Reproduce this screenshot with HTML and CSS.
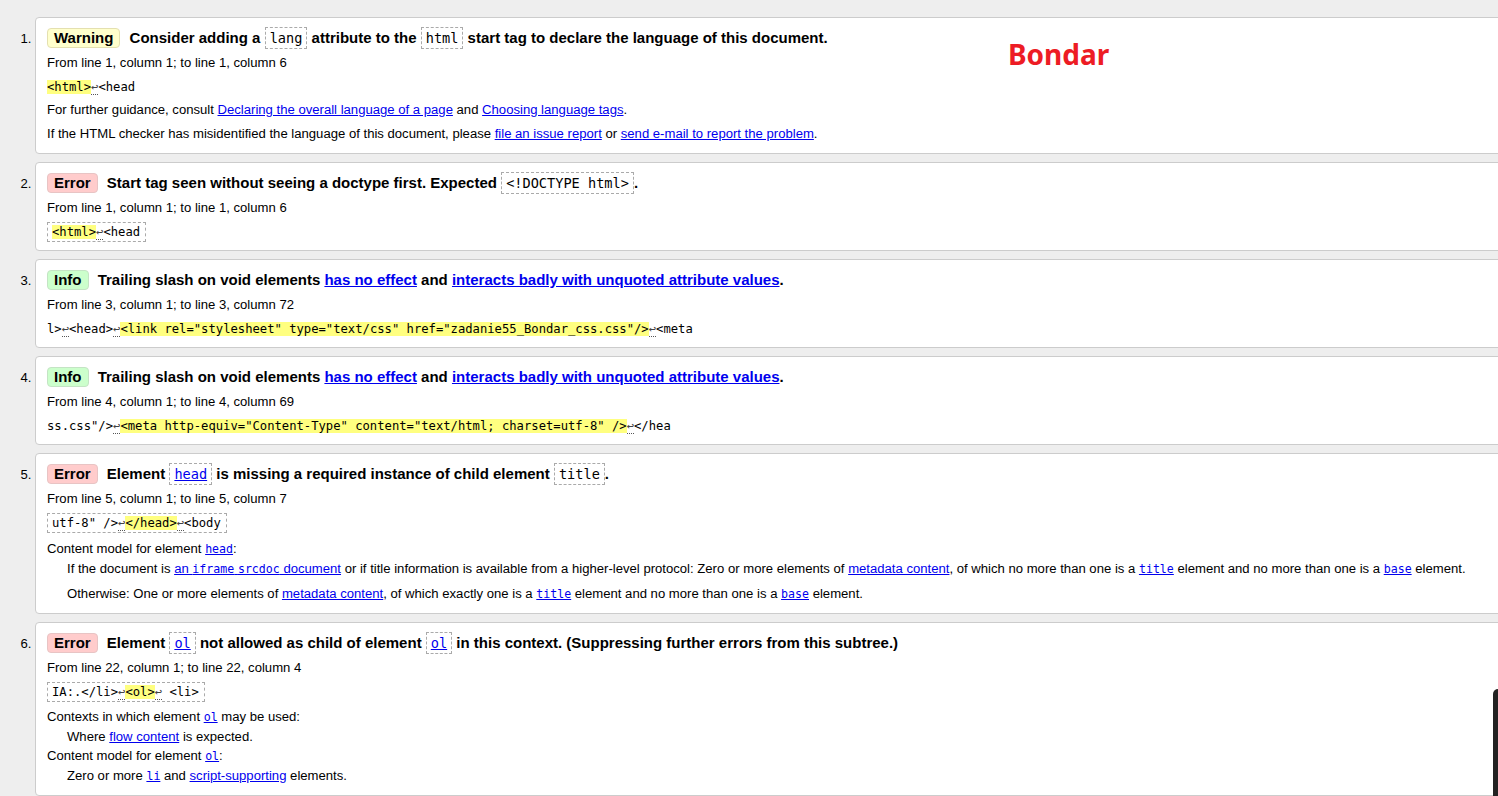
FILE: index.html
```html
<!DOCTYPE html>
<html lang="en">
<head>
<meta charset="utf-8">
<title>Nu Html Checker results</title>
<link rel="stylesheet" href="styles.css">
</head>
<body>
<ol class="results">
  <li class="msg txt-end">
    <p class="title"><span class="badge warning">Warning</span> Consider adding a <code class="tc">lang</code> attribute to the <code class="tc">html</code> start tag to declare the language of this document.</p>
    <p class="loc">From line 1, column 1; to line 1, column 6</p>
    <div class="extract"><code class="ex"><span class="hl">&lt;html&gt;</span><span class="lf">↩</span>&lt;head</code></div>
    <p class="t5">For further guidance, consult <a href="#">Declaring the overall language of a page</a> and <a href="#">Choosing language tags</a>.</p>
    <p class="t8">If the HTML checker has misidentified the language of this document, please <a href="#">file an issue report</a> or <a href="#">send e-mail to report the problem</a>.</p>
  </li>
  <li class="msg">
    <p class="title"><span class="badge error">Error</span> Start tag seen without seeing a doctype first. Expected <code class="tc">&lt;!DOCTYPE html&gt;</code>.</p>
    <p class="loc">From line 1, column 1; to line 1, column 6</p>
    <div class="extract"><code class="ex boxed"><span class="hl">&lt;html&gt;</span><span class="lf">↩</span>&lt;head</code></div>
  </li>
  <li class="msg">
    <p class="title"><span class="badge info">Info</span> Trailing slash on void elements <a href="#">has no effect</a> and <a href="#">interacts badly with unquoted attribute values</a>.</p>
    <p class="loc">From line 3, column 1; to line 3, column 72</p>
    <div class="extract"><code class="ex">l&gt;<span class="lf">↩</span>&lt;head&gt;<span class="lf">↩</span><span class="hl">&lt;link rel="stylesheet" type="text/css" href="zadanie55_Bondar_css.css"/&gt;</span><span class="lf">↩</span>&lt;meta</code></div>
  </li>
  <li class="msg">
    <p class="title"><span class="badge info">Info</span> Trailing slash on void elements <a href="#">has no effect</a> and <a href="#">interacts badly with unquoted attribute values</a>.</p>
    <p class="loc">From line 4, column 1; to line 4, column 69</p>
    <div class="extract"><code class="ex">ss.css"/&gt;<span class="lf">↩</span><span class="hl">&lt;meta http-equiv="Content-Type" content="text/html; charset=utf-8" /&gt;</span><span class="lf">↩</span>&lt;/hea</code></div>
  </li>
  <li class="msg txt-end">
    <p class="title"><span class="badge error">Error</span> Element <a href="#" class="tc">head</a> is missing a required instance of child element <code class="tc">title</code>.</p>
    <p class="loc">From line 5, column 1; to line 5, column 7</p>
    <div class="extract"><code class="ex boxed">utf-8" /&gt;<span class="lf">↩</span><span class="hl">&lt;/head&gt;</span><span class="lf">↩</span>&lt;body</code></div>
    <p class="t8">Content model for element <a href="#" class="pc">head</a>:</p>
    <p class="dd t4">If the document is <a href="#">an <code class="pc">iframe</code> <code class="pc">srcdoc</code> document</a> or if title information is available from a higher-level protocol: Zero or more elements of <a href="#">metadata content</a>, of which no more than one is a <a href="#" class="pc">title</a> element and no more than one is a <a href="#" class="pc">base</a> element.</p>
    <p class="dd t9">Otherwise: One or more elements of <a href="#">metadata content</a>, of which exactly one is a <a href="#" class="pc">title</a> element and no more than one is a <a href="#" class="pc">base</a> element.</p>
  </li>
  <li class="msg txt-end">
    <p class="title"><span class="badge error">Error</span> Element <a href="#" class="tc">ol</a> not allowed as child of element <a href="#" class="tc">ol</a> in this context. (Suppressing further errors from this subtree.)</p>
    <p class="loc">From line 22, column 1; to line 22, column 4</p>
    <div class="extract"><code class="ex boxed">IA:.&lt;/li&gt;<span class="lf">↩</span><span class="hl">&lt;ol&gt;</span><span class="lf">↩</span> &lt;li&gt;</code></div>
    <p class="t7">Contexts in which element <a href="#" class="pc">ol</a> may be used:</p>
    <p class="dd t4">Where <a href="#">flow content</a> is expected.</p>
    <p class="t3">Content model for element <a href="#" class="pc">ol</a>:</p>
    <p class="dd t4">Zero or more <a href="#" class="pc">li</a> and <a href="#">script-supporting</a> elements.</p>
  </li>
</ol>
<div class="stamp">Bondar</div>
<div class="edge"></div>
</body>
</html>
```
FILE: styles.css
```css
html, body {
  margin: 0;
  padding: 0;
}
body {
  background: #eeeeee;
  color: #000;
  font-family: "Liberation Sans", Arial, sans-serif;
  font-size: 13.12px;
  height: 796px;
  overflow: hidden;
  position: relative;
}
.results {
  margin: 0;
  padding: 17px 0 0 35px;
}
.msg {
  background: #fff;
  border: 1px solid #cccccc;
  border-radius: 4px;
  padding: 10px 12px 8px 11px;
  margin: 0 -20px 8px 0;
}
.msg.txt-end {
  padding-bottom: 11px;
}
.msg p {
  margin: 0;
  line-height: 16px;
}
.msg .title {
  font-size: 15px;
  font-weight: bold;
  line-height: 20px;
}
.badge {
  display: inline-block;
  vertical-align: top;
  line-height: 18px;
  padding: 0 6px;
  border: 1px solid #d8d8d8;
  border-radius: 4px;
  margin-right: 5px;
}
.badge.warning { background: #ffffcc; border-color: #e4e0b0; }
.badge.error { background: #ffcccc; border-color: #e8c4c4; }
.badge.info { background: #ccffcc; border-color: #c4e4c4; }
.tc {
  font-family: "DejaVu Sans Mono", monospace;
  font-weight: normal;
  font-size: 13.6px;
  border: 1px dashed #aaaaaa;
  padding: 2px 4px;
}
.pc {
  font-family: "DejaVu Sans Mono", monospace;
  font-size: 11.6px;
}
a { color: #0000ee; }
a code.pc { color: #0000ee; }
.msg .loc { margin-top: 7px; }
.extract {
  margin-top: 6px;
  height: 20px;
}
.ex {
  font-family: "DejaVu Sans Mono", monospace;
  font-size: 12.2px;
  line-height: 20px;
  display: inline-block;
  white-space: pre;
}
.ex.boxed {
  line-height: 16px;
  border: 1px dashed #aaaaaa;
  padding: 1px 5px 1px 4px;
}
.hl { background: #ffff80; }
.lf {
  color: #444;
  border-bottom: 1px dotted #555;
}
.msg .t3 { margin-top: 3px; }
.msg .t4 { margin-top: 4px; }
.msg .t5 { margin-top: 5px; }
.msg .t7 { margin-top: 7px; }
.msg .t8 { margin-top: 8px; }
.msg .t9 { margin-top: 9px; }
.msg .dd { padding-left: 20px; }
.stamp {
  position: absolute;
  left: 1008px;
  top: 40px;
  font-family: "Noto Sans", "Open Sans", sans-serif;
  font-weight: bold;
  font-size: 28px;
  line-height: 28px;
  color: #ed1c24;
}
.edge {
  position: absolute;
  right: 0;
  top: 689px;
  width: 5px;
  height: 107px;
  background: #222;
  border-top-left-radius: 5px;
}
```
